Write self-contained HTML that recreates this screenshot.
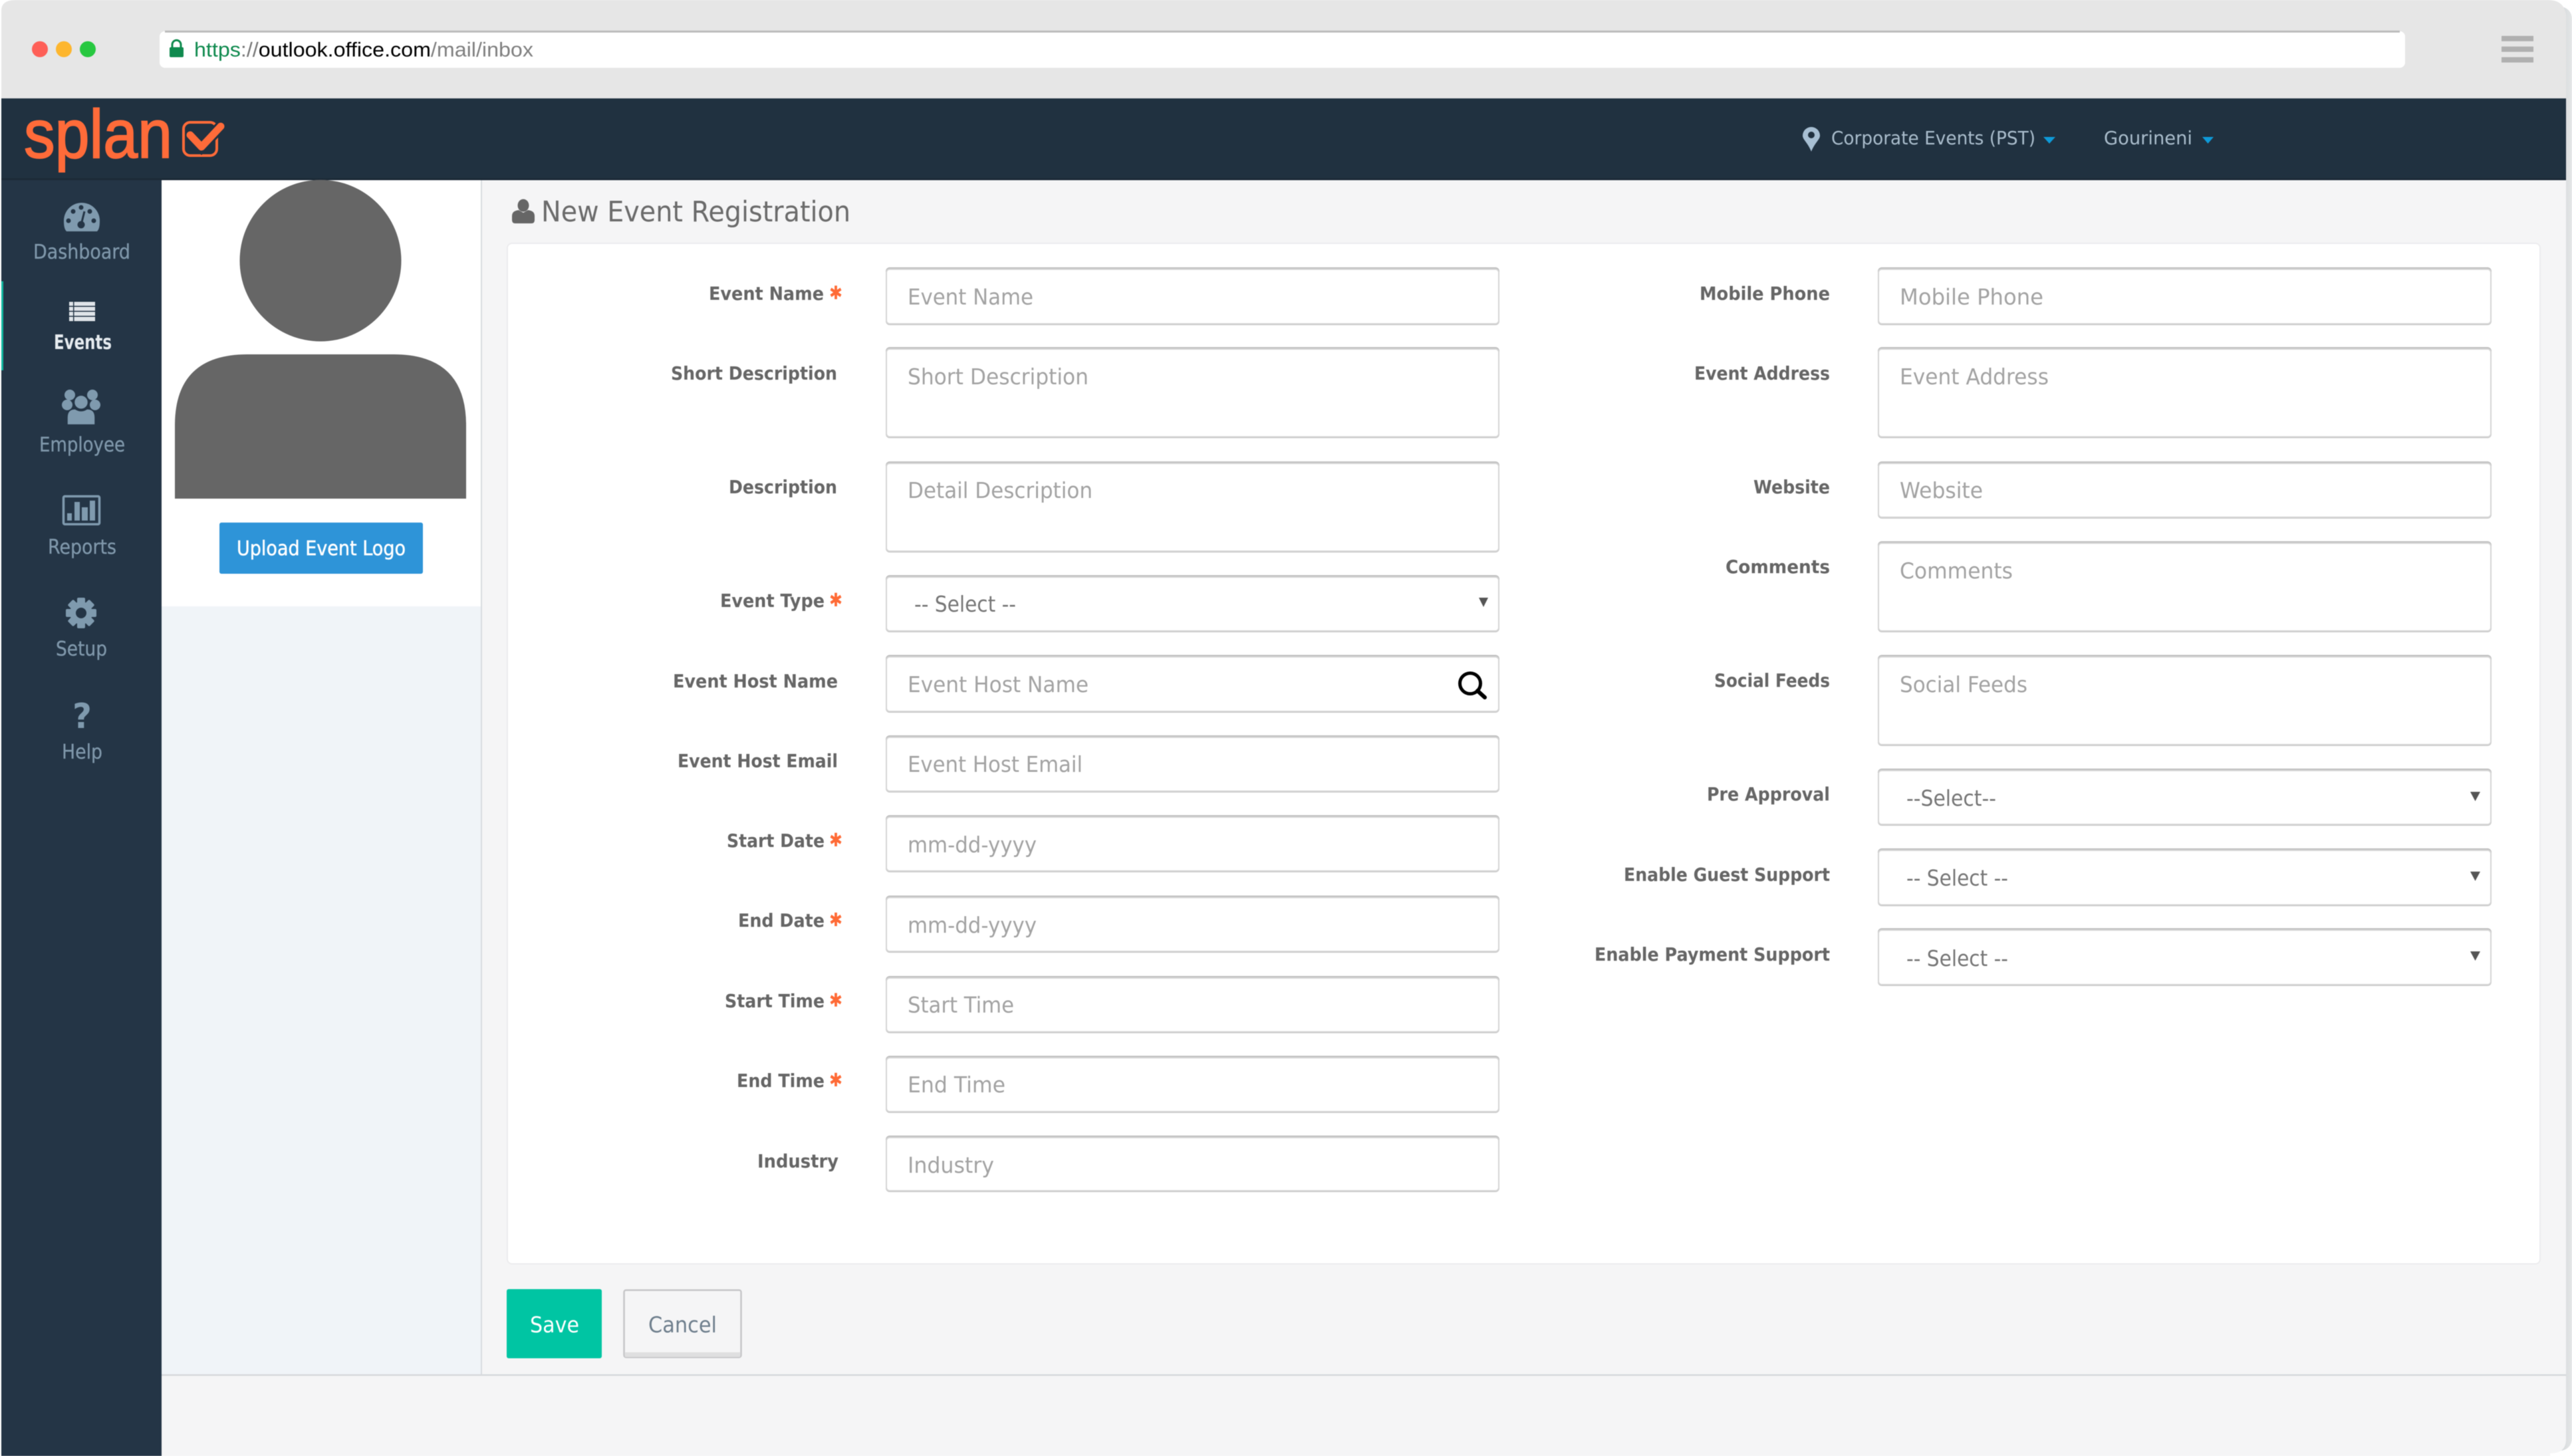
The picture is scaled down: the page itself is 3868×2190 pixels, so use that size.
<!DOCTYPE html>
<html lang="en"><head><meta charset="utf-8"><title>New Event Registration</title>
<style>
html,body{margin:0;padding:0;background:#fff;width:3868px;height:2190px;overflow:hidden}
svg{display:block;filter:blur(.6px)}
text{font-family:"DejaVu Sans","Liberation Sans",sans-serif}
.l{font-weight:700;font-size:28px;fill:#666}
.p{font-size:33px;fill:#a3a3a3}
.s{font-size:33px;fill:#777}
.n{font-size:30px;fill:#7f97aa;stroke:#7f97aa;stroke-width:.3}
.t{font-size:28px;fill:#a9bccb}
.b{fill:#fff;stroke:#d6d6d6;stroke-width:2;transform:translateY(1px);filter:drop-shadow(0 1.5px 0 #c4c4c4) drop-shadow(0 -1.5px 0 #c0c0c0)}
.x{fill:#ff6a35;font-weight:700;font-size:28px}
.i{fill:#7f9aae}
</style></head><body>
<svg width="3868" height="2190" viewBox="0 0 3868 2190" xmlns="http://www.w3.org/2000/svg">
<defs><linearGradient id="edge" x1="0" x2="1" y1="0" y2="0"><stop offset="0" stop-color="#c3c8cc"/><stop offset="1" stop-color="#e4e6e7"/></linearGradient></defs>
<rect width="3868" height="2190" fill="#fff"/>
<rect x="3830" y="10" width="38" height="2172" rx="18" fill="url(#edge)"/>
<path d="M2 20 Q2 0 30 0 H3830 Q3859 0 3859 28 V2165 Q3859 2186 3835 2186 L3835 2190 H2 Z" fill="#f5f5f6"/>
<path d="M2 148 V16 Q2 0 24 0 H3832 Q3859 0 3859 28 V148 Z" fill="#e6e6e6"/>
<!-- browser chrome -->
<circle cx="60" cy="74" r="12" fill="#fe5f57"/><circle cx="96" cy="74" r="12" fill="#fdb62e"/><circle cx="132" cy="74" r="12" fill="#27c840"/>
<rect x="240" y="47" width="3377" height="55" rx="8" fill="#fff"/>
<path d="M248 47.500 H3609" stroke="#bcbcbc" stroke-width="3"/>
<rect x="255" y="71" width="21" height="15" rx="2" fill="#0f8a4e"/><path d="M259 72 V67 A6.500 6.500 0 0 1 272 67 V72" fill="none" stroke="#0f8a4e" stroke-width="3"/>
<text x="292" y="85" textLength="510" lengthAdjust="spacingAndGlyphs" style="font-family:'Liberation Sans',sans-serif;font-size:31px"><tspan fill="#0f8a4e">https</tspan><tspan fill="#777">://</tspan><tspan fill="#000">outlook.office.com</tspan><tspan fill="#808080">/mail/inbox</tspan></text>
<rect x="3762" y="54" width="48" height="8" fill="#b0b0b0"/><rect x="3762" y="70" width="48" height="8" fill="#b0b0b0"/><rect x="3762" y="86" width="48" height="8" fill="#b0b0b0"/>
<!-- header -->
<rect x="2" y="148" width="3857" height="123" fill="#203140"/>
<rect x="2" y="268" width="3857" height="3" fill="#1c2a37"/>
<text x="36" y="237" textLength="223" lengthAdjust="spacingAndGlyphs" style="font-family:'Liberation Sans',sans-serif;font-size:103px;fill:#ff6b39;stroke:#ff6b39;stroke-width:2">splan</text>
<rect x="276" y="184" width="50" height="50" rx="10" fill="none" stroke="#ff6b39" stroke-width="4"/>
<path d="M286 203 L303 221 L334 188" fill="none" stroke="#203140" stroke-width="17"/>
<path d="M286 203 L303 221 L332 190" fill="none" stroke="#ff6b39" stroke-width="11" stroke-linecap="round" stroke-linejoin="round"/>
<path d="M2724 228 C2719 215 2711 210 2711 204 A13 13 0 0 1 2737 204 C2737 210 2729 215 2724 228Z" fill="#a7bfd3"/><circle cx="2724" cy="203" r="5" fill="#203140"/>
<text class="t" x="2754" y="217" textLength="307" lengthAdjust="spacingAndGlyphs">Corporate Events (PST)</text>
<path d="M3073 206 H3091 L3082 216Z" fill="#0e9ad8"/>
<text class="t" x="3164" y="217" textLength="133" lengthAdjust="spacingAndGlyphs">Gourineni</text>
<path d="M3312 206 H3329 L3320.500 216Z" fill="#0e9ad8"/>
<!-- sidebar -->
<rect x="2" y="271" width="241" height="1919" fill="#243546"/>
<rect x="2" y="423" width="3" height="134" fill="#11b8a0"/>
<path class="i" d="M100 348 C97 345 96 340 96 332 A27 27 0 0 1 150 332 C150 340 149 345 146 348 Z"/>
<g fill="#243546"><circle cx="103" cy="332" r="3.500"/><circle cx="110" cy="318" r="3.500"/><circle cx="122" cy="312" r="3.500"/><circle cx="135" cy="318" r="3.500"/><circle cx="141" cy="332" r="3.500"/><circle cx="122" cy="338" r="5.500"/></g>
<path d="M127 318 L122 338" stroke="#243546" stroke-width="3"/>
<text class="n" x="50" y="389" textLength="146" lengthAdjust="spacingAndGlyphs">Dashboard</text>
<g fill="#dfe4e9"><rect x="104" y="454" width="39" height="29"/></g><g fill="#243546"><rect x="104" y="460" width="39" height="1.500"/><rect x="104" y="467.500" width="39" height="1.500"/><rect x="104" y="475" width="39" height="1.500"/><rect x="110" y="454" width="1.500" height="29"/></g>
<text x="81" y="525" textLength="87" lengthAdjust="spacingAndGlyphs" style="font-size:30px;font-weight:700;fill:#e6ebef">Events</text>
<g class="i"><circle cx="105" cy="594" r="8"/><circle cx="139" cy="594" r="8"/><circle cx="101" cy="609" r="8"/><circle cx="143" cy="609" r="8"/>
<circle cx="122" cy="605" r="11" stroke="#243546" stroke-width="2.500"/><path d="M101 639 V628 Q101 615 113 615 Q122 621 131 615 Q143 615 143 628 V639 Z" stroke="#243546" stroke-width="1.500"/></g>
<text class="n" x="59" y="679" textLength="129" lengthAdjust="spacingAndGlyphs">Employee</text>
<rect x="95.500" y="746.500" width="54" height="42" rx="2" fill="none" stroke="#7f9aae" stroke-width="3.500"/>
<g class="i"><rect x="101" y="772" width="7" height="11"/><rect x="112" y="755" width="8" height="28"/><rect x="123" y="763" width="9" height="20"/><rect x="135" y="753" width="8" height="30"/></g>
<text class="n" x="72" y="833" textLength="103" lengthAdjust="spacingAndGlyphs">Reports</text>
<g class="i"><circle cx="122" cy="922" r="17"/><rect x="116" y="899" width="12" height="46" rx="2"/><rect x="99" y="916" width="46" height="12" rx="2"/><rect x="116" y="899" width="12" height="46" rx="2" transform="rotate(45 122 922)"/><rect x="116" y="899" width="12" height="46" rx="2" transform="rotate(-45 122 922)"/></g><circle cx="122" cy="922" r="8" fill="#243546"/>
<text class="n" x="84" y="986" textLength="77" lengthAdjust="spacingAndGlyphs">Setup</text>
<text x="109" y="1095" textLength="29" lengthAdjust="spacingAndGlyphs" style="font-size:52px;font-weight:700;fill:#7f9aae">?</text>
<text class="n" x="93" y="1141" textLength="61" lengthAdjust="spacingAndGlyphs">Help</text>
<!-- left panel -->
<rect x="243" y="271" width="481" height="641" fill="#fff"/>
<rect x="243" y="912" width="481" height="1156" fill="#f0f4f8"/>
<rect x="723" y="271" width="2" height="1797" fill="#d8dce0"/>
<ellipse cx="482" cy="392" rx="121.500" ry="121.500" fill="#666"/>
<path d="M263 750 V640 Q263 533 372 533 H592 Q701 533 701 640 V750 Z" fill="#666"/>
<rect x="330" y="786" width="306" height="77" rx="3" fill="#2e94d8"/>
<text x="356" y="835" textLength="254" lengthAdjust="spacingAndGlyphs" style="font-size:30px;fill:#fff;stroke:#fff;stroke-width:.5">Upload Event Logo</text>
<rect x="243" y="2067" width="3616" height="2.500" fill="#d6d9dc"/>
<!-- title -->
<ellipse cx="787" cy="309" rx="8.500" ry="9.500" fill="#666"/><path d="M770 331 V325 Q770 317 780 316 L787 320 L794 316 Q804 317 804 325 V331 Q804 336 799 336 H775 Q770 336 770 331Z" fill="#666"/>
<text x="814" y="333" textLength="465" lengthAdjust="spacingAndGlyphs" style="font-size:43px;fill:#6b6b6b">New Event Registration</text>
<!-- card -->
<rect x="763" y="366" width="3057" height="1535" rx="7" fill="#fff" stroke="#ececee" stroke-width="2"/>
<!-- left column boxes -->
<rect class="b" x="1333" y="404" width="921" height="82" rx="5"/>
<rect class="b" x="1333" y="524" width="921" height="132" rx="5"/>
<rect class="b" x="1333" y="696" width="921" height="132" rx="5"/>
<rect class="b" x="1333" y="867" width="921" height="81" rx="5"/>
<rect class="b" x="1333" y="987" width="921" height="82" rx="5"/>
<rect class="b" x="1333" y="1108" width="921" height="81" rx="5"/>
<rect class="b" x="1333" y="1228" width="921" height="81" rx="5"/>
<rect class="b" x="1333" y="1349" width="921" height="81" rx="5"/>
<rect class="b" x="1333" y="1470" width="921" height="81" rx="5"/>
<rect class="b" x="1333" y="1590" width="921" height="81" rx="5"/>
<rect class="b" x="1333" y="1710" width="921" height="80" rx="5"/>
<!-- right column boxes -->
<rect class="b" x="2825" y="404" width="921" height="82" rx="5"/>
<rect class="b" x="2825" y="524" width="921" height="132" rx="5"/>
<rect class="b" x="2825" y="696" width="921" height="81" rx="5"/>
<rect class="b" x="2825" y="816" width="921" height="132" rx="5"/>
<rect class="b" x="2825" y="987" width="921" height="132" rx="5"/>
<rect class="b" x="2825" y="1158" width="921" height="81" rx="5"/>
<rect class="b" x="2825" y="1278" width="921" height="82" rx="5"/>
<rect class="b" x="2825" y="1398" width="921" height="82" rx="5"/>
<!-- left labels -->
<text class="l" x="1066" y="451" textLength="173" lengthAdjust="spacingAndGlyphs">Event Name</text><text class="x" x="1247" y="450" textLength="20" lengthAdjust="spacingAndGlyphs">✱</text>
<text class="l" x="1009" y="571" textLength="250" lengthAdjust="spacingAndGlyphs">Short Description</text>
<text class="l" x="1096" y="742" textLength="163" lengthAdjust="spacingAndGlyphs">Description</text>
<text class="l" x="1083" y="913" textLength="157" lengthAdjust="spacingAndGlyphs">Event Type</text><text class="x" x="1247" y="912" textLength="20" lengthAdjust="spacingAndGlyphs">✱</text>
<text class="l" x="1012" y="1034" textLength="248" lengthAdjust="spacingAndGlyphs">Event Host Name</text>
<text class="l" x="1019" y="1154" textLength="241" lengthAdjust="spacingAndGlyphs">Event Host Email</text>
<text class="l" x="1093" y="1274" textLength="147" lengthAdjust="spacingAndGlyphs">Start Date</text><text class="x" x="1247" y="1273" textLength="20" lengthAdjust="spacingAndGlyphs">✱</text>
<text class="l" x="1110" y="1394" textLength="130" lengthAdjust="spacingAndGlyphs">End Date</text><text class="x" x="1247" y="1393" textLength="20" lengthAdjust="spacingAndGlyphs">✱</text>
<text class="l" x="1090" y="1515" textLength="150" lengthAdjust="spacingAndGlyphs">Start Time</text><text class="x" x="1247" y="1514" textLength="20" lengthAdjust="spacingAndGlyphs">✱</text>
<text class="l" x="1108" y="1635" textLength="132" lengthAdjust="spacingAndGlyphs">End Time</text><text class="x" x="1247" y="1634" textLength="20" lengthAdjust="spacingAndGlyphs">✱</text>
<text class="l" x="1139" y="1756" textLength="122" lengthAdjust="spacingAndGlyphs">Industry</text>
<!-- left placeholders -->
<text class="p" x="1365" y="458" textLength="189" lengthAdjust="spacingAndGlyphs">Event Name</text>
<text class="p" x="1365" y="578" textLength="272" lengthAdjust="spacingAndGlyphs">Short Description</text>
<text class="p" x="1365" y="749" textLength="278" lengthAdjust="spacingAndGlyphs">Detail Description</text>
<text class="s" x="1375" y="920" textLength="153" lengthAdjust="spacingAndGlyphs">-- Select --</text>
<path d="M2224 899 H2238 L2231 913Z" fill="#555"/>
<text class="p" x="1365" y="1041" textLength="272" lengthAdjust="spacingAndGlyphs">Event Host Name</text>
<circle cx="2211" cy="1028" r="15.500" fill="none" stroke="#000" stroke-width="5"/><path d="M2222 1039 L2233 1049" stroke="#000" stroke-width="6" stroke-linecap="round"/>
<text class="p" x="1365" y="1161" textLength="263" lengthAdjust="spacingAndGlyphs">Event Host Email</text>
<text class="p" x="1365" y="1282" textLength="194" lengthAdjust="spacingAndGlyphs">mm-dd-yyyy</text>
<text class="p" x="1365" y="1403" textLength="194" lengthAdjust="spacingAndGlyphs">mm-dd-yyyy</text>
<text class="p" x="1365" y="1523" textLength="160" lengthAdjust="spacingAndGlyphs">Start Time</text>
<text class="p" x="1365" y="1643" textLength="147" lengthAdjust="spacingAndGlyphs">End Time</text>
<text class="p" x="1365" y="1764" textLength="130" lengthAdjust="spacingAndGlyphs">Industry</text>
<!-- right labels -->
<text class="l" x="2556" y="451" textLength="196" lengthAdjust="spacingAndGlyphs">Mobile Phone</text>
<text class="l" x="2548" y="571" textLength="204" lengthAdjust="spacingAndGlyphs">Event Address</text>
<text class="l" x="2637" y="742" textLength="115" lengthAdjust="spacingAndGlyphs">Website</text>
<text class="l" x="2595" y="862" textLength="157" lengthAdjust="spacingAndGlyphs">Comments</text>
<text class="l" x="2578" y="1033" textLength="174" lengthAdjust="spacingAndGlyphs">Social Feeds</text>
<text class="l" x="2567" y="1204" textLength="185" lengthAdjust="spacingAndGlyphs">Pre Approval</text>
<text class="l" x="2442" y="1325" textLength="310" lengthAdjust="spacingAndGlyphs">Enable Guest Support</text>
<text class="l" x="2398" y="1445" textLength="354" lengthAdjust="spacingAndGlyphs">Enable Payment Support</text>
<!-- right placeholders -->
<text class="p" x="2857" y="458" textLength="216" lengthAdjust="spacingAndGlyphs">Mobile Phone</text>
<text class="p" x="2857" y="578" textLength="224" lengthAdjust="spacingAndGlyphs">Event Address</text>
<text class="p" x="2857" y="749" textLength="125" lengthAdjust="spacingAndGlyphs">Website</text>
<text class="p" x="2857" y="870" textLength="170" lengthAdjust="spacingAndGlyphs">Comments</text>
<text class="p" x="2857" y="1041" textLength="192" lengthAdjust="spacingAndGlyphs">Social Feeds</text>
<text class="s" x="2867" y="1212" textLength="135" lengthAdjust="spacingAndGlyphs">--Select--</text>
<text class="s" x="2867" y="1332" textLength="153" lengthAdjust="spacingAndGlyphs">-- Select --</text>
<text class="s" x="2867" y="1453" textLength="153" lengthAdjust="spacingAndGlyphs">-- Select --</text>
<path d="M3715 1191 H3730 L3722.500 1205Z" fill="#555"/><path d="M3715 1311 H3730 L3722.500 1325Z" fill="#555"/><path d="M3715 1431 H3730 L3722.500 1445Z" fill="#555"/>
<!-- buttons -->
<rect x="762" y="1939" width="143" height="104" rx="3" fill="#00c5a3"/>
<text x="797" y="2004" textLength="74" lengthAdjust="spacingAndGlyphs" style="font-size:33px;fill:#fff">Save</text>
<rect x="938.500" y="1940.500" width="176" height="101" rx="3" fill="#f5f5f6" stroke="#c6c6c8" stroke-width="2.500"/>
<rect x="940" y="2034" width="173" height="7" fill="#dfdfe0"/>
<text x="975" y="2004" textLength="103" lengthAdjust="spacingAndGlyphs" style="font-size:33px;fill:#6f7f8d">Cancel</text>
</svg>
</body></html>
